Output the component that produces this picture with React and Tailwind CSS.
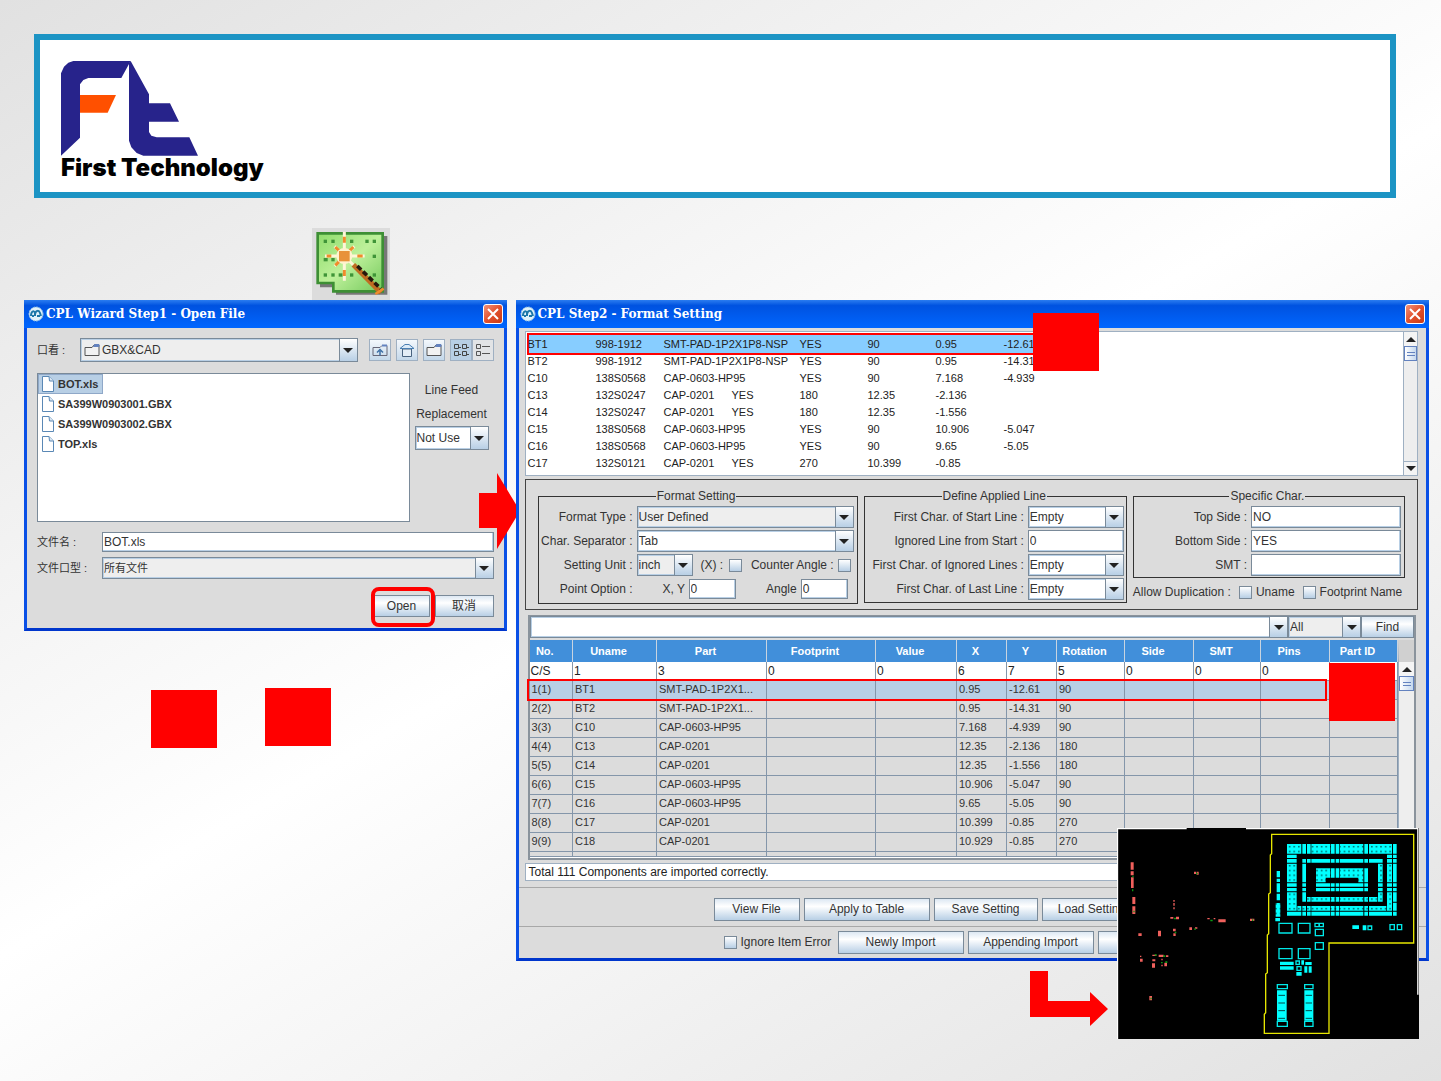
import React from "react";

const PREVIEW_LINES = [
  "BT1\t998-1912\tSMT-PAD-1P2X1P8-NSP\tYES\t90\t0.95\t-12.61",
  "BT2\t998-1912\tSMT-PAD-1P2X1P8-NSP\tYES\t90\t0.95\t-14.31",
  "C10\t138S0568\tCAP-0603-HP95\tYES\t90\t7.168\t-4.939",
  "C13\t132S0247\tCAP-0201\tYES\t180\t12.35\t-2.136",
  "C14\t132S0247\tCAP-0201\tYES\t180\t12.35\t-1.556",
  "C15\t138S0568\tCAP-0603-HP95\tYES\t90\t10.906\t-5.047",
  "C16\t138S0568\tCAP-0603-HP95\tYES\t90\t9.65\t-5.05",
  "C17\t132S0121\tCAP-0201\tYES\t270\t10.399\t-0.85",
];

const COLUMNS = [
  { name: "No.", width: 43, source: "C/S" },
  { name: "Uname", width: 84, source: "1" },
  { name: "Part", width: 110, source: "3" },
  { name: "Footprint", width: 109, source: "0" },
  { name: "Value", width: 81, source: "0" },
  { name: "X", width: 50, source: "6" },
  { name: "Y", width: 50, source: "7" },
  { name: "Rotation", width: 68, source: "5" },
  { name: "Side", width: 69, source: "0" },
  { name: "SMT", width: 67, source: "0" },
  { name: "Pins", width: 69, source: "0" },
  { name: "Part ID", width: 68, source: "" },
];

const COMPONENTS = [
  ["1(1)", "BT1", "SMT-PAD-1P2X1...", "", "", "0.95", "-12.61", "90"],
  ["2(2)", "BT2", "SMT-PAD-1P2X1...", "", "", "0.95", "-14.31", "90"],
  ["3(3)", "C10", "CAP-0603-HP95", "", "", "7.168", "-4.939", "90"],
  ["4(4)", "C13", "CAP-0201", "", "", "12.35", "-2.136", "180"],
  ["5(5)", "C14", "CAP-0201", "", "", "12.35", "-1.556", "180"],
  ["6(6)", "C15", "CAP-0603-HP95", "", "", "10.906", "-5.047", "90"],
  ["7(7)", "C16", "CAP-0603-HP95", "", "", "9.65", "-5.05", "90"],
  ["8(8)", "C17", "CAP-0201", "", "", "10.399", "-0.85", "270"],
  ["9(9)", "C18", "CAP-0201", "", "", "10.929", "-0.85", "270"],
];

const FILES = ["BOT.xls", "SA399W0903001.GBX", "SA399W0903002.GBX", "TOP.xls"];

const Logo = () => (
  <svg className="h-[95px] w-[138px]" viewBox="123 123 414 285">
    <path
      fill="#27238b"
      d="M123 407V160L132 140L145 128L160 123H332L304 174H205L190 180L180 193V353Z"
    />
    <path fill="#ff5000" d="M180 225H288L263 278H180Z" />
    <path
      fill="#27238b"
      d="M327 130L332 123L387 223V250H450L477 305H387V336L394 347L410 352H508L534 407H370L350 399L334 382L327 362Z"
    />
  </svg>
);

const WizardIcon = () => (
  <svg className="block h-[72px] w-[78px]" viewBox="876 624 234 216">
    <defs>
      <linearGradient id="board" x1="0" y1="0" x2="1" y2="1">
        <stop offset="0" stopColor="#8fdc6c" />
        <stop offset="0.5" stopColor="#bdf09a" />
        <stop offset="1" stopColor="#74c95c" />
      </linearGradient>
    </defs>
    <rect x="876" y="624" width="234" height="216" fill="#dcdcdc" />
    <path fill="#777" d="M900 648H1102V824H948V802H900Z" />
    <path
      fill="url(#board)"
      stroke="#3d8f34"
      strokeWidth="8"
      d="M893 640H1088V814H940V789H893Z"
    />
    <g fill="#3f9438">
      <rect x="911" y="659" width="10" height="10" />
      <rect x="934" y="659" width="10" height="10" />
      <rect x="990" y="659" width="10" height="10" />
      <rect x="1036" y="659" width="10" height="10" />
      <rect x="1058" y="659" width="10" height="10" />
      <rect x="1058" y="704" width="10" height="10" />
      <rect x="911" y="714" width="12" height="10" />
      <rect x="934" y="714" width="10" height="10" />
      <rect x="911" y="760" width="10" height="10" />
      <rect x="934" y="760" width="10" height="10" />
      <rect x="956" y="760" width="12" height="10" />
      <rect x="990" y="760" width="10" height="10" />
      <rect x="1058" y="760" width="10" height="10" />
    </g>
    <g stroke="#fff6d8" strokeWidth="9">
      <path d="M973 635V782M915 708H1034M944 679L1003 738M1003 679L944 738" />
    </g>
    <g stroke="#f08c2c" strokeWidth="9">
      <path d="M973 650V668M973 750V768M920 708H934M1012 708H1028M946 681L957 692M989 692L1000 681M946 736L957 725" />
    </g>
    <circle cx="973" cy="708" r="24" fill="#fff3cf" />
    <rect x="957" y="693" width="32" height="31" fill="#e8923a" />
    <path d="M1000 734L1083 818" stroke="#c06d22" strokeWidth="15" />
    <path
      d="M1012 738L1082 806"
      stroke="#26180c"
      strokeWidth="11"
      strokeDasharray="16 8"
    />
    <path d="M1066 822L1091 806" stroke="#f08c2c" strokeWidth="8" />
  </svg>
);

const Triangle = ({ up }) => (
  <svg className="h-[5px] w-[10px]" viewBox="0 0 10 5">
    <path d={up ? "M0 5H10L5 0Z" : "M0 0H10L5 5Z"} fill="#222" />
  </svg>
);

const Combo = ({
  id,
  label,
  value,
  className = "",
  fill = "bg-white",
  size = "text-xs",
}) => (
  <div
    className={`relative h-full min-w-0 border border-[#7a8a99] shadow-[inset_0_0_0_1px_#b8cfe5] ${fill} ${className}`}
  >
    <select
      id={id}
      aria-label={label}
      defaultValue={value}
      className={`block h-full w-full appearance-none truncate bg-transparent pr-[18px] pl-px text-[#333] outline-none ${size}`}
    >
      <option>{value}</option>
    </select>
    <span className="pointer-events-none absolute inset-y-0 right-0 flex w-[18px] items-center justify-center border-l border-[#7a8a99] bg-linear-to-b from-white to-[#b8cfe5]">
      <Triangle />
    </span>
  </div>
);

const TextBox = ({ id, label, value = "", className = "" }) => (
  <input
    id={id}
    aria-label={label}
    type="text"
    defaultValue={value}
    className={`h-full min-w-0 border border-[#7a8a99] bg-white pb-px pl-px text-xs text-[#333] shadow-[inset_-1px_-1px_0_#b8cfe5] outline-none ${className}`}
  />
);

const CheckBox = ({ id, label }) => (
  <input
    id={id}
    aria-label={label}
    type="checkbox"
    className="size-[13px] shrink-0 appearance-none border border-[#7a8a99] bg-linear-to-b from-white to-[#b8cfe5]"
  />
);

const MetalButton = ({ children, className = "" }) => (
  <button
    type="button"
    className={`block border border-[#7a8a99] bg-linear-to-b from-[#dde8f3] via-white via-35% to-[#b8cfe5] text-xs text-[#333] ${className}`}
  >
    {children}
  </button>
);

const FieldRow = ({ htmlFor, label, children, className }) => (
  <div className={`grid h-[22px] items-center gap-1 ${className}`}>
    <label htmlFor={htmlFor} className="text-right whitespace-nowrap">
      {label} :
    </label>
    {children}
  </div>
);

const GroupBox = ({ title, children, className = "" }) => (
  <fieldset className={`min-w-0 border border-[#333] pt-0.5 ${className}`}>
    <legend className="mx-auto px-px leading-4">{title}</legend>
    <div className="flex flex-col gap-0.5">{children}</div>
  </fieldset>
);

const ScrollBar = ({ down, className = "" }) => (
  <div
    className={`flex flex-col border-l border-[#9fb0c2] bg-[#eee] ${className}`}
  >
    <button
      type="button"
      aria-label="Scroll up"
      className="flex h-[14px] shrink-0 items-center justify-center bg-[#f4f4f4]"
    >
      <Triangle up />
    </button>
    <span className="flex h-[15px] shrink-0 flex-col items-center justify-center gap-0.5 border border-[#6382bf] bg-linear-to-r from-white to-[#c4d8ee]">
      <i className="h-px w-2 bg-[#6382bf]" />
      <i className="h-px w-2 bg-[#6382bf]" />
    </span>
    {down && (
      <button
        type="button"
        aria-label="Scroll down"
        className="mt-auto flex h-[14px] items-center justify-center border-t border-[#9fb0c2] bg-[#f4f4f4]"
      >
        <Triangle />
      </button>
    )}
  </div>
);

const Window = ({ title, children, className = "" }) => (
  <section
    className={`relative border-x-[3px] border-b-[3px] border-x-[#0a50e6] border-b-[#0036cc] bg-[#dcdcdc] ${className}`}
  >
    <header className="-mx-[3px] flex h-7 items-center bg-linear-to-b from-[#2a7cf0] via-[#0052e0] via-20% to-[#0066ff] pr-1 pl-1">
      <svg className="size-4 shrink-0" viewBox="0 0 16 16">
        <circle
          cx="8"
          cy="8"
          r="7"
          fill="#dff1fa"
          stroke="#9cc8e4"
          strokeDasharray="2 1"
        />
        <path
          d="M3 10C3 5 6 4 7 7V10M7 8C8 4 11 4 12 7L13 10M4 10H6M9 10H12"
          fill="none"
          stroke="#1b77a8"
          strokeWidth="2"
        />
      </svg>
      <h2 className="ml-0.5 flex-1 font-['DejaVu_Serif',serif] text-xs font-bold whitespace-pre text-white">
        {title}
      </h2>
      <button
        type="button"
        aria-label="Close"
        className="flex size-5 items-center justify-center rounded-[3px] border border-white bg-linear-to-br from-[#f09078] via-[#e2502c] to-[#c83a14]"
      >
        <svg className="size-3" viewBox="0 0 12 12">
          <path d="M1 1L11 11M11 1L1 11" stroke="#fff" strokeWidth="2" />
        </svg>
      </button>
    </header>
    {children}
  </section>
);

const FolderIcon = () => (
  <svg className="h-3.5 w-4 shrink-0" viewBox="0 0 16 14">
    <path d="M1 12.5V4.5H8L10 2H15V12.5Z" fill="#f2f2f2" stroke="#555" />
    <path
      d="M9.500 3.500L10.500 1.500H15V3.500Z"
      fill="#6382bf"
      stroke="#6382bf"
    />
  </svg>
);

const FileIcon = () => (
  <svg className="h-4 w-3 shrink-0" viewBox="0 0 12 16">
    <path d="M.5.5H7L11.500 5V15.500H.5Z" fill="#fff" stroke="#5a88b5" />
    <path d="M7 .5L7.500 5H11.500" fill="#dbe8f4" stroke="#5a88b5" />
  </svg>
);

const ToolButton = ({ label, pressed, flat, children }) => (
  <button
    type="button"
    aria-label={label}
    className={`flex size-[22px] items-center justify-center border border-[#9fb0c2] ${
      pressed
        ? "bg-[#b8cfe5]"
        : flat
          ? "bg-[#e2e4e6]"
          : "bg-linear-to-b from-[#f4f8fc] to-[#c4d8ea]"
    }`}
  >
    {children}
  </button>
);

const OpenFileWindow = () => (
  <Window title="CPL Wizard Step1 - Open File">
    <div className="px-[10px] pt-[10px] pb-[11px]">
      <div className="flex h-6 items-center">
        <label htmlFor="look-in" className="w-[43px] text-[11px]">
          口看 :
        </label>
        <div className="relative h-full flex-1">
          <Combo
            id="look-in"
            value="GBX&amp;CAD"
            fill="bg-[#eee] pl-[20px]"
          />
          <span className="pointer-events-none absolute top-[5px] left-1">
            <FolderIcon />
          </span>
        </div>
        <div className="ml-[11px] flex gap-[5px]">
          <ToolButton label="Up One Level">
            <svg className="h-3.5 w-4" viewBox="0 0 16 14" fill="none">
              <path d="M1 12.500V4.500H8L10 2.500H15V12.500Z" stroke="#667" />
              <path d="M10 2.500H15" stroke="#6382bf" strokeWidth="2" />
              <path
                d="M8 12.500V8M5 9.500L8 6.500L11 9.500"
                stroke="#3d6fa5"
                strokeWidth="1.500"
              />
            </svg>
          </ToolButton>
          <ToolButton label="Home">
            <svg className="size-4" viewBox="0 0 16 16">
              <path
                d="M3.500 7V14.500H12.500V7Z"
                fill="#e4eef7"
                stroke="#48637f"
              />
              <path
                d="M1 6.500L6 2.500H10L15 6.500Z"
                fill="#dcebf8"
                stroke="#4a7fb3"
              />
            </svg>
          </ToolButton>
          <ToolButton label="Create New Folder">
            <FolderIcon />
          </ToolButton>
          <div className="flex">
            <ToolButton label="List" pressed>
              <svg
                className="size-4"
                viewBox="0 0 16 16"
                fill="none"
                stroke="#444"
              >
                <path d="M1.500 2.500H5.500V6.500H1.500ZM9.500 2.500H13.500V6.500H9.500ZM1.500 9.500H5.500V13.500H1.500ZM9.500 9.500H13.500V13.500H9.500ZM6 5.500H8M14 5.500H16M6 12.500H8M14 12.500H16" />
              </svg>
            </ToolButton>
            <ToolButton label="Details" flat>
              <svg
                className="size-4"
                viewBox="0 0 16 16"
                fill="none"
                stroke="#555"
              >
                <path d="M1.500 2.500H5.500V6.500H1.500ZM1.500 9.500H5.500V13.500H1.500ZM7 4.500H15M7 11.500H15" />
              </svg>
            </ToolButton>
          </div>
        </div>
      </div>

      <div className="mt-[11px] flex">
        <ul className="h-[149px] flex-1 border border-[#7a8a99] bg-white text-[11px] leading-[18px] font-bold">
          {FILES.map((file, index) => (
            <li
              key={file}
              className={`flex w-fit items-center gap-1 border pr-1 pl-[3px] ${
                index === 0
                  ? "border-[#8fa8c8] bg-[#b8cfe5]"
                  : "border-transparent"
              }`}
            >
              <FileIcon />
              {file}
            </li>
          ))}
        </ul>
        <div className="w-[84px] pt-[5px] text-center text-xs leading-6">
          <label htmlFor="line-feed" className="block">
            Line Feed
            <br />
            Replacement
          </label>
          <div className="mx-auto h-6 w-[74px]">
            <Combo id="line-feed" value="Not Use" />
          </div>
        </div>
      </div>

      <div className="mt-[10px] flex h-5 items-center">
        <label htmlFor="file-name" className="w-[65px] text-[11px]">
          文件名 :
        </label>
        <TextBox id="file-name" value="BOT.xls" className="flex-1" />
      </div>
      <div className="mt-[5px] flex h-[22px] items-center">
        <label htmlFor="file-type" className="w-[65px] text-[11px]">
          文件口型 :
        </label>
        <Combo
          id="file-type"
          value="所有文件"
          fill="bg-[#eee]"
          size="text-[11px]"
          className="flex-1"
        />
      </div>

      <div className="mt-4 flex h-[22px] justify-end gap-[5px]">
        <div className="relative">
          <MetalButton className="h-full w-14">Open</MetalButton>
          <span className="pointer-events-none absolute -top-2 -left-[3px] h-10 w-16 rounded-lg border-4 border-[#ff0000]" />
        </div>
        <MetalButton className="w-[59px]">取消</MetalButton>
      </div>
    </div>
  </Window>
);

const FormatSettings = () => (
  <div className="mt-[3px] border border-[#444] px-3 pt-2 pb-[5px] text-xs text-[#333]">
    <div className="grid grid-cols-[320fr_263fr_272fr] items-start gap-1.5">
      <GroupBox title="Format Setting" className="pr-[3px] pb-[3px]">
        <FieldRow
          htmlFor="format-type"
          label="Format Type"
          className="grid-cols-[94px_1fr]"
        >
          <Combo id="format-type" value="User Defined" fill="bg-[#eee]" />
        </FieldRow>
        <FieldRow
          htmlFor="separator"
          label="Char. Separator"
          className="grid-cols-[94px_1fr]"
        >
          <Combo id="separator" value="Tab" />
        </FieldRow>
        <FieldRow
          htmlFor="unit"
          label="Setting Unit"
          className="grid-cols-[94px_1fr]"
        >
          <div className="flex h-full items-center pr-[3px]">
            <Combo id="unit" value="inch" fill="bg-[#eee]" className="w-14" />
            <label htmlFor="mirror-x" className="ml-2 w-7">
              (X) :
            </label>
            <CheckBox id="mirror-x" />
            <label htmlFor="counter" className="mr-1 ml-auto">
              Counter Angle :
            </label>
            <CheckBox id="counter" />
          </div>
        </FieldRow>
        <FieldRow
          htmlFor="point-xy"
          label="Point Option"
          className="grid-cols-[94px_1fr]"
        >
          <div className="flex h-5 items-center pr-1.5 pl-[26px]">
            <label htmlFor="point-xy" className="w-[26px]">
              X, Y
            </label>
            <TextBox id="point-xy" value="0" className="w-[47px]" />
            <label htmlFor="angle" className="mr-1 ml-auto">
              Angle
            </label>
            <TextBox id="angle" value="0" className="w-[47px]" />
          </div>
        </FieldRow>
      </GroupBox>

      <GroupBox title="Define Applied Line" className="pr-0.5 pb-0.5">
        <FieldRow
          htmlFor="start-line"
          label="First Char. of Start Line"
          className="grid-cols-[1fr_96px]"
        >
          <Combo id="start-line" value="Empty" />
        </FieldRow>
        <FieldRow
          htmlFor="ignored-start"
          label="Ignored Line from Start"
          className="grid-cols-[1fr_96px]"
        >
          <TextBox id="ignored-start" value="0" />
        </FieldRow>
        <FieldRow
          htmlFor="ignored-lines"
          label="First Char. of Ignored Lines"
          className="grid-cols-[1fr_96px]"
        >
          <Combo id="ignored-lines" value="Empty" />
        </FieldRow>
        <FieldRow
          htmlFor="last-line"
          label="First Char. of Last Line"
          className="grid-cols-[1fr_96px]"
        >
          <Combo id="last-line" value="Empty" />
        </FieldRow>
      </GroupBox>

      <div>
        <GroupBox title="Specific Char." className="pr-[3px] pb-px">
          <FieldRow
            htmlFor="top-side"
            label="Top Side"
            className="grid-cols-[1fr_150px]"
          >
            <TextBox id="top-side" value="NO" />
          </FieldRow>
          <FieldRow
            htmlFor="bottom-side"
            label="Bottom Side"
            className="grid-cols-[1fr_150px]"
          >
            <TextBox id="bottom-side" value="YES" />
          </FieldRow>
          <FieldRow
            htmlFor="smt"
            label="SMT"
            className="grid-cols-[1fr_150px]"
          >
            <TextBox id="smt" />
          </FieldRow>
        </GroupBox>
        <div className="mt-1.5 flex items-center">
          <span className="mr-2 whitespace-nowrap">Allow Duplication :</span>
          <CheckBox id="dup-uname" />
          <label htmlFor="dup-uname" className="mx-1">
            Uname
          </label>
          <span className="ml-1 flex">
            <CheckBox id="dup-footprint" />
          </span>
          <label htmlFor="dup-footprint" className="ml-1 whitespace-nowrap">
            Footprint Name
          </label>
        </div>
      </div>
    </div>
  </div>
);

const ComponentTable = () => (
  <div className="relative mt-[5px] mr-0.5 ml-[3px] border-x-2 border-t border-b-2 border-[#8a939c] bg-white pb-px">
    <div className="flex h-6 bg-[#dcdcdc] pb-0.5">
      <Combo label="Search" value="" className="flex-1" />
      <Combo
        label="Search in"
        value="All"
        fill="bg-[#eee]"
        className="w-[73px]"
      />
      <MetalButton className="w-[53px]">Find</MetalButton>
    </div>
    <div className="flex">
      <div className="min-w-0 flex-1">
        <table className="w-full table-fixed border-collapse text-[11px] leading-none text-[#333]">
          <colgroup>
            {COLUMNS.map((column) => (
              <col key={column.name} style={{ width: column.width }} />
            ))}
          </colgroup>
          <thead>
            <tr className="h-[22px] bg-[#418fda] text-white">
              {COLUMNS.map((column) => (
                <th
                  key={column.name}
                  className="border-r border-[#c8d4e0] p-0 pr-3"
                >
                  {column.name}
                </th>
              ))}
            </tr>
          </thead>
          <tbody>
            <tr className="h-[18px] bg-white text-[#222]">
              {COLUMNS.map((column) => (
                <td
                  key={column.name}
                  className="border-r border-b border-[#8496aa] p-0 pl-px text-xs leading-none"
                >
                  {column.source}
                </td>
              ))}
            </tr>
            {COMPONENTS.map((row, index) => (
              <tr
                key={row[0]}
                className={`h-[19px] ${index === 0 ? "bg-[#b8cfe5]" : "bg-[#dcdcdc]"}`}
              >
                {COLUMNS.map((column, i) => (
                  <td
                    key={column.name}
                    className="border-r border-b border-[#8496aa] p-0 pl-0.5 whitespace-nowrap"
                  >
                    {row[i]}
                  </td>
                ))}
              </tr>
            ))}
            <tr className="h-[5px] bg-[#dcdcdc]">
              {COLUMNS.map((column) => (
                <td
                  key={column.name}
                  className="border-r border-b border-[#8496aa] p-0"
                />
              ))}
            </tr>
          </tbody>
        </table>
      </div>
      <ScrollBar className="w-4 border-t-[22px] border-t-[#d0d0d0]" />
    </div>
    <span className="pointer-events-none absolute top-[63px] right-[87px] -left-[3px] h-[22px] border-2 border-[#ff0000]" />
    <span className="absolute top-[47px] right-[19px] h-[58px] w-[66px] bg-[#ff0000]" />
  </div>
);

// column spans shared by every ring of the pad array
const PAD_X = [
  [531, 574],
  [577, 588],
  [591, 602],
  [604, 661],
  [663, 674],
  [677, 688],
  [690, 760],
  [763, 774],
  [777, 846],
  [849, 860],
];
const PAD_Y = [
  [104, 114],
  [117, 128],
  [131, 187],
  [190, 200],
  [204, 214],
  [217, 245],
];

const clipSpans = (spans, from, to) =>
  spans
    .map(([a, b]) => [Math.max(a, from), Math.min(b, to)])
    .filter(([a, b]) => b - a > 3);

const padRow = (from, to, y1, y2) =>
  clipSpans(PAD_X, from, to).map(([a, b]) => [a, y1, b, y2]);
const padColumn = (x1, x2, from, to) =>
  clipSpans(PAD_Y, from, to).map(([a, b]) => [x1, a, x2, b]);

const PLAIN_PADS = [
  ...padRow(575, 603, 72, 101),
  ...padRow(662, 689, 72, 101),
  ...padRow(762, 775, 72, 101),
  ...padRow(848, 862, 72, 101),
  ...padRow(577, 818, 117, 128),
  ...padRow(531, 860, 275, 287),
  ...padColumn(849, 860, 104, 245),
  ...padColumn(577, 588, 131, 245),
  ...padRow(663, 689, 145, 173),
  [763, 145, 774, 187],
  ...padRow(618, 774, 190, 200),
  ...padRow(618, 774, 204, 214),
  [849, 248, 860, 272],
  [531, 104, 560, 114],
  [531, 117, 560, 128],
  [531, 190, 560, 200],
  [531, 204, 560, 214],
  [831, 104, 846, 114],
  [831, 117, 846, 128],
  [831, 190, 846, 200],
  [831, 204, 846, 214],
  [804, 190, 818, 200],
  [804, 204, 818, 214],
  [500, 153, 510, 172],
  [500, 176, 510, 186],
  [500, 190, 510, 217],
  [500, 221, 510, 241],
  [496, 294, 510, 304],
  [510, 425, 551, 435],
  [510, 439, 551, 449],
  [574, 421, 582, 434],
  [586, 426, 605, 435],
  [583, 439, 592, 458],
  [596, 439, 605, 458],
  [559, 456, 575, 467],
  [727, 316, 747, 327],
  [758, 316, 769, 331],
];

const DOTTED_PADS = [
  [531, 72, 574, 101],
  [604, 72, 661, 101],
  [690, 72, 760, 101],
  [777, 72, 846, 101],
  [531, 131, 560, 187],
  [531, 217, 560, 272],
  [831, 131, 846, 187],
  [831, 217, 846, 272],
  [804, 131, 818, 187],
  [804, 217, 818, 245],
  ...padRow(562, 829, 258, 272),
  ...padRow(591, 802, 231, 245),
  [618, 145, 661, 173],
  [618, 173, 647, 187],
  [690, 145, 760, 173],
  [745, 173, 760, 187],
  [497, 249, 511, 290],
];

const HOLLOW_PADS = [
  [507, 310, 546, 339],
  [565, 310, 600, 339],
  [507, 386, 546, 416],
  [565, 386, 600, 416],
  [615, 310, 627, 320],
  [628, 310, 640, 320],
  [616, 328, 640, 347],
  [616, 368, 640, 388],
  [558, 423, 568, 433],
  [561, 440, 573, 451],
  [774, 318, 785, 329],
  [840, 314, 853, 329],
  [862, 314, 875, 329],
  [502, 494, 532, 506],
  [584, 494, 609, 506],
  [502, 604, 532, 619],
  [584, 604, 609, 619],
];

const RED_PARTS = [
  [62, 127, 71, 149],
  [62, 154, 71, 166],
  [63, 172, 71, 204],
  [67, 231, 76, 252],
  [67, 259, 76, 282],
  [252, 155, 258, 162],
  [260, 155, 266, 164],
  [190, 240, 194, 245],
  [190, 249, 194, 257],
  [190, 262, 194, 268],
  [181, 291, 190, 296],
  [198, 290, 207, 298],
  [292, 294, 299, 298],
  [311, 294, 316, 298],
  [325, 298, 347, 307],
  [420, 296, 433, 303],
  [238, 322, 246, 330],
  [255, 322, 262, 326],
  [144, 332, 153, 349],
  [189, 326, 197, 334],
  [190, 340, 197, 348],
  [85, 340, 95, 348],
  [90, 407, 94, 411],
  [90, 416, 98, 425],
  [127, 404, 139, 408],
  [146, 404, 161, 411],
  [168, 406, 175, 411],
  [127, 418, 136, 424],
  [126, 430, 135, 443],
  [154, 416, 158, 421],
  [163, 428, 171, 439],
  [154, 434, 158, 439],
  [118, 528, 126, 541],
];

const GREEN_PARTS = [
  [67, 167, 71, 172],
  [66, 208, 70, 214],
  [70, 272, 74, 277],
  [258, 158, 263, 163],
  [192, 293, 198, 298],
  [301, 299, 308, 304],
  [426, 298, 430, 303],
  [253, 325, 257, 330],
  [194, 335, 199, 340],
  [134, 403, 140, 407],
  [160, 406, 166, 411],
  [166, 424, 172, 429],
  [153, 426, 158, 430],
  [121, 533, 125, 538],
];

const boxPath = (boxes) =>
  boxes.map(([a, b, c, d]) => `M${a} ${b}H${c}V${d}H${a}Z`).join("");

const BoardPreview = () => (
  <svg
    className="absolute top-[528px] right-[7px] h-[211px] w-[302px]"
    viewBox="21 24 906 633"
  >
    <defs>
      <pattern
        id="pads"
        x="531"
        y="72"
        width="13.7"
        height="14.3"
        patternUnits="userSpaceOnUse"
      >
        <rect width="14" height="15" fill="#00ffff" />
        <rect x="6" y="6" width="4" height="4" fill="#003838" />
      </pattern>
    </defs>
    <path d="M21 24H927V657H21Z" fill="#000" />
    <path
      d="M22.500 657V26H230M408 26H923.500V524"
      fill="none"
      stroke="#fff"
      strokeWidth="4"
    />
    <path
      d="M485 43H911V369H657V640H463V583L467 578V462L472 458V345L476 341V222L481 218V105L485 101Z"
      fill="none"
      stroke="#e6e600"
      strokeWidth="4"
    />
    <path d={boxPath(PLAIN_PADS)} fill="#00ffff" />
    <path d={boxPath(DOTTED_PADS)} fill="url(#pads)" />
    <path
      d={boxPath(HOLLOW_PADS)}
      fill="none"
      stroke="#00e8e8"
      strokeWidth="4"
    />
    <path d="M501 511H530V602H501ZM583 511H610V602H583Z" fill="#00ffff" />
    <path
      d="M505 526H525M505 549H525M505 572H525M505 595H525M587 526H606M587 549H606M587 572H606M587 595H606"
      stroke="#004848"
      strokeWidth="3"
    />
    <path d={boxPath(RED_PARTS)} fill="#f0605c" />
    <path d={boxPath(GREEN_PARTS)} fill="#0a9a12" />
  </svg>
);

const FormatWindow = () => (
  <Window title="CPL Step2 - Format Setting">
    <div className="pt-[3px] pr-2 pl-1.5">
      <div className="relative flex border border-[#9fb0c2] bg-white">
        <span className="absolute top-px left-px h-[22px] w-[509px] border-2 border-[#ff0000] bg-[#87cdff]" />
        <div className="relative flex-1 pt-1 pb-[3px] pl-0.5 text-[11px] leading-[17px] text-[#222]">
          {PREVIEW_LINES.map((line) => (
            <pre
              key={line}
              className="font-['Liberation_Sans',Arial,sans-serif] [tab-size:68px]"
            >
              {line}
            </pre>
          ))}
        </div>
        <ScrollBar down className="w-[14px]" />
      </div>
      <FormatSettings />
      <ComponentTable />
      <p className="mt-[3px] h-[18px] border border-[#9fb0c2] bg-white pl-[3px] text-xs leading-4 text-[#222]">
        Total 111 Components are imported correctly.
      </p>
    </div>
    <div className="mt-1.5 flex gap-1 border-t border-[#a8a8a8] pt-[10px] pb-[5px] pl-[195px]">
      <MetalButton className="h-[23px] w-[86px]">View File</MetalButton>
      <MetalButton className="h-[23px] w-[126px]">Apply to Table</MetalButton>
      <MetalButton className="h-[23px] w-[104px]">Save Setting</MetalButton>
      <MetalButton className="h-[23px] w-[100px]">Load Setting</MetalButton>
    </div>
    <div className="flex items-center gap-1 border-t border-[#a8a8a8] py-1 pl-[205px]">
      <CheckBox id="ignore-error" />
      <label htmlFor="ignore-error" className="w-[93px] text-xs">
        Ignore Item Error
      </label>
      <MetalButton className="h-[23px] w-[126px]">Newly Import</MetalButton>
      <MetalButton className="h-[23px] w-[126px]">Appending Import</MetalButton>
      <button
        type="button"
        aria-label="Cancel"
        className="h-[23px] w-[100px] border border-[#7a8a99] bg-linear-to-b from-[#dde8f3] via-white via-35% to-[#b8cfe5]"
      />
    </div>
    <span className="absolute top-[13px] left-[514px] h-[58px] w-[66px] bg-[#ff0000]" />
    <svg
      className="absolute top-[671px] left-[511px] h-[55px] w-[78px]"
      viewBox="0 0 78 55"
    >
      <path d="M0 0H18V30H60V21L78 38L60 55V46H0Z" fill="#ff0000" />
    </svg>
    <BoardPreview />
  </Window>
);

const App = () => (
  <main className="min-h-screen bg-[linear-gradient(150deg,#e1e1e1_0%,#ffffff_50%,#e1e1e1_100%)] pt-[34px] pb-[120px] font-['Liberation_Sans','Noto_Sans_CJK_SC',sans-serif] text-[#333]">
    <header className="mr-[45px] ml-[34px] h-[164px] border-[6px] border-[#1c94c4] bg-white pt-[21px] pl-[21px]">
      <Logo />
      <h1 className="font-['Inter',sans-serif] text-2xl leading-6 font-black text-black">
        First Technology
      </h1>
    </header>
    <div className="mt-[30px] pl-[312px]">
      <WizardIcon />
    </div>
    <div className="relative grid grid-cols-[483fr_913fr] gap-[9px] pr-3 pl-6">
      <div className="relative">
        <OpenFileWindow />
        <svg
          className="absolute top-[173px] -right-[13px] h-[76px] w-[41px]"
          viewBox="0 0 41 76"
        >
          <path d="M0 20H18V0L41 38L18 76V55H0Z" fill="#ff0000" />
        </svg>
        <div className="mt-[57px] ml-[127px] flex gap-12">
          <span className="mt-0.5 h-[58px] w-[66px] bg-[#ff0000]" />
          <span className="h-[58px] w-[66px] bg-[#ff0000]" />
        </div>
      </div>
      <FormatWindow />
    </div>
  </main>
);

export default App;
